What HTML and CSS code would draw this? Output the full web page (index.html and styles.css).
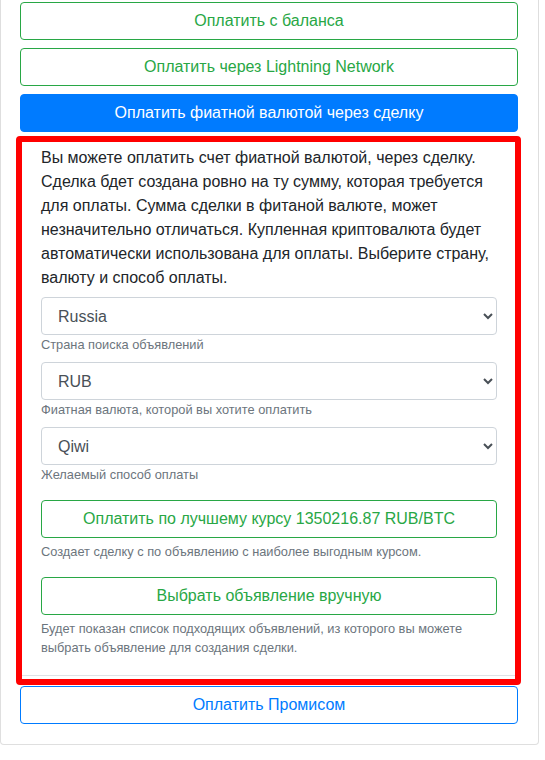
FILE: index.html
```html
<!DOCTYPE html>
<html lang="ru">
<head>
<meta charset="utf-8">
<title>Оплата</title>
<link rel="stylesheet" href="styles.css">
</head>
<body>
<div class="card">
  <div class="card-body">
    <button class="btn btn-outline-success gap">Оплатить с баланса</button>
    <button class="btn btn-outline-success gap">Оплатить через Lightning Network</button>
    <button class="btn btn-primary">Оплатить фиатной валютой через сделку</button>
    <div class="highlight">
      <div class="fiat-body">
        <p class="intro">Вы можете оплатить счет фиатной валютой, через сделку. Сделка бдет создана ровно на ту сумму, которая требуется для оплаты. Сумма сделки в фитаной валюте, может незначительно отличаться. Купленная криптовалюта будет автоматически использована для оплаты. Выберите страну, валюту и способ оплаты.</p>
        <div class="field">
          <select class="form-control"><option>Russia</option></select>
          <small class="hint">Страна поиска объявлений</small>
        </div>
        <div class="field">
          <select class="form-control"><option>RUB</option></select>
          <small class="hint">Фиатная валюта, которой вы хотите оплатить</small>
        </div>
        <div class="field field-last">
          <select class="form-control"><option>Qiwi</option></select>
          <small class="hint">Желаемый способ оплаты</small>
        </div>
        <div class="action">
          <button class="btn btn-outline-success">Оплатить по лучшему курсу 1350216.87 RUB/BTC</button>
          <small class="hint hint-action">Создает сделку с по объявлению с наиболее выгодным курсом.</small>
        </div>
        <div class="action action-last">
          <button class="btn btn-outline-success">Выбрать объявление вручную</button>
          <small class="hint hint-action">Будет показан список подходящих объявлений, из которого вы можете выбрать объявление для создания сделки.</small>
        </div>
      </div>
    </div>
    <button class="btn btn-outline-primary">Оплатить Промисом</button>
  </div>
</div>
</body>
</html>
```
FILE: styles.css
```css
body {
  margin: 0;
  background: #fff;
  color: #212529;
  font-family: "Liberation Sans", Arial, sans-serif;
}

.card {
  width: 539px;
  box-sizing: border-box;
  border: 1px solid rgba(0, 0, 0, 0.125);
  border-top: 0;
  border-radius: 0 0 4px 4px;
  background: #fff;
}

.card-body {
  display: flex;
  flex-direction: column;
  padding: 2px 20px 20px 19px;
}

.btn {
  display: block;
  width: 100%;
  box-sizing: border-box;
  margin: 0;
  padding: 6px 12px;
  font-family: "Liberation Sans", Arial, sans-serif;
  font-size: 16px;
  line-height: 24px;
  text-align: center;
  background: #fff;
  border: 1px solid transparent;
  border-radius: 4px;
}

.btn-outline-success {
  color: #28a745;
  border-color: #28a745;
}

.btn-primary {
  color: #fff;
  background: #007bff;
  border-color: #007bff;
}

.btn-outline-primary {
  color: #007bff;
  border-color: #007bff;
}

.gap {
  margin-bottom: 8px;
}

.highlight {
  margin: 4px -3px 1px -4px;
  border: 6px solid #ff0000;
  border-radius: 4px;
  padding: 4px 0 3px;
}

.fiat-body {
  padding: 0 18px 0 19px;
  border-bottom: 1px solid #dee2e6;
}

.intro {
  margin: 0 0 7px;
  font-size: 16px;
  line-height: 24px;
}

.field {
  display: flex;
  flex-direction: column;
  margin-bottom: 8px;
}

.field-last {
  margin-bottom: 15px;
}

.form-control {
  display: block;
  width: 100%;
  height: 38px;
  box-sizing: border-box;
  margin: 0;
  padding: 6px 12px;
  font-family: "Liberation Sans", Arial, sans-serif;
  font-size: 16px;
  line-height: 24px;
  color: #495057;
  background: #fff;
  border: 1px solid #ced4da;
  border-radius: 4px;
}

.hint {
  display: block;
  font-size: 12.8px;
  line-height: 19.2px;
  color: #6c757d;
}

.hint-action {
  margin-top: 4px;
}

.action {
  display: flex;
  flex-direction: column;
  margin-bottom: 16px;
}

.action-last {
  margin-bottom: 18px;
}
```
